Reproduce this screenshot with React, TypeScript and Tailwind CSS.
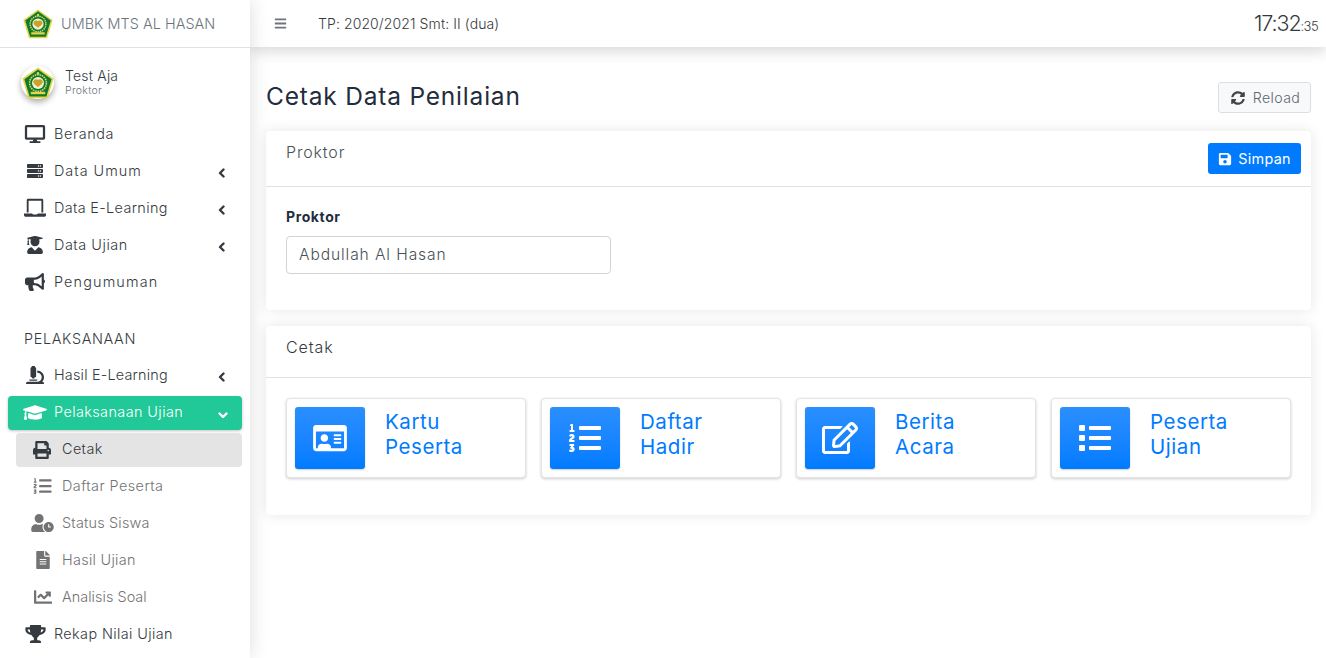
import React from "react";
import {
  FaDesktop, FaServer, FaUserGraduate, FaBullhorn, FaMicroscope, FaGraduationCap,
  FaPrint, FaListOl, FaUserClock, FaFileAlt, FaChartLine, FaTrophy, FaBars, FaSyncAlt, FaSave,
  FaRegIdCard, FaRegEdit, FaList,
} from "react-icons/fa";

function Logo({ className }: { className: string }) {
  return (
    <svg viewBox="0 0 40 40" className={className}>
      <path d="M20 0.5 L39.5 14.5 L32 39 L8 39 L0.5 14.5 Z" fill="#e5d44a" />
      <path d="M20 3 L37 15.3 L30.5 37 L9.5 37 L3 15.3 Z" fill="#0f7a2c" />
      <circle cx="20" cy="20" r="10.5" fill="none" stroke="#d9d36a" strokeWidth="2" strokeDasharray="2 1" />
      <circle cx="20" cy="20" r="7.5" fill="#f3f0d0" />
      <path d="M20 16 C17 14 14 16 14 19 C15 22 18 23 20 25 C22 23 25 22 26 19 C26 16 23 14 20 16Z" fill="#c9a227" />
      <path d="M11 31 H29 V34 H11Z" fill="#e5d44a" />
      <circle cx="20" cy="8" r="1.6" fill="#e5d44a" />
    </svg>
  );
}

function LaptopIcon() {
  return (
    <svg viewBox="0 0 24 20" className="w-[24px] h-[20px]" fill="currentColor">
      <path d="M3 1.5 C3 .7 3.7 0 4.5 0 H19.5 C20.3 0 21 .7 21 1.5 V15 H19 V2 H5 V15 H3 Z" />
      <path d="M0 16 H9 C9.2 16.8 9.8 17 10.5 17 H13.5 C14.2 17 14.8 16.8 15 16 H24 V17.5 C24 18.6 23.1 19.5 22 19.5 H2 C.9 19.5 0 18.6 0 17.5 Z" />
    </svg>
  );
}

function Angle({ down }: { down?: boolean }) {
  return (
    <svg viewBox="0 0 10 10" className="ml-auto w-[10px] h-[10px] mt-[4px]" fill="none" stroke="currentColor" strokeWidth="2.4" strokeLinecap="round" strokeLinejoin="round">
      <path d={down ? "M1.5 3.5 L5 7 L8.5 3.5" : "M6.5 1.5 L3 5 L6.5 8.5"} />
    </svg>
  );
}

type Item = { label: string; icon: React.ReactNode; arrow?: boolean; track: string };

const mainTop: Item[] = [
  { label: "Beranda", icon: <FaDesktop className="w-[22px] h-[18px]" />, track: "tracking-[0.6px]" },
  { label: "Data Umum", icon: <FaServer className="w-[18px] h-[16px]" />, arrow: true, track: "tracking-[1px]" },
  { label: "Data E-Learning", icon: <LaptopIcon />, arrow: true, track: "tracking-[0.35px]" },
  { label: "Data Ujian", icon: <FaUserGraduate className="w-[16px] h-[18px]" />, arrow: true, track: "tracking-[0.55px]" },
  { label: "Pengumuman", icon: <FaBullhorn className="w-[20px] h-[18px]" />, track: "tracking-[1.15px]" },
];

const sub: Item[] = [
  { label: "Daftar Peserta", icon: <FaListOl className="w-[19px] h-[18px]" />, track: "tracking-[0.45px]" },
  { label: "Status Siswa", icon: <FaUserClock className="w-[23px] h-[18px]" />, track: "tracking-[0.2px]" },
  { label: "Hasil Ujian", icon: <FaFileAlt className="w-[14px] h-[18px]" />, track: "tracking-[0.3px]" },
  { label: "Analisis Soal", icon: <FaChartLine className="w-[20px] h-[18px]" />, track: "tracking-[0.05px]" },
];

function NavRow({ item }: { item: Item }) {
  return (
    <div className="h-[34px] flex items-center pl-[24px] pr-[23px] text-[#343a40] shrink-0">
      <span className="w-[22px] flex justify-center shrink-0">{item.icon}</span>
      <span className={`ml-[8px] text-[14.4px] font-light text-[#343a40] whitespace-nowrap ${item.track}`}>{item.label}</span>
      {item.arrow && <Angle />}
    </div>
  );
}

function Tile({ icon, a, b }: { icon: React.ReactNode; a: string; b: string }) {
  return (
    <div className="flex-1 h-[80px] bg-white rounded-[4px] border border-[#e3e4e6] shadow-[0_1px_3px_rgba(0,0,0,0.2)] p-[8px] flex">
      <div className="w-[70px] h-[62px] rounded-[3px] bg-gradient-to-b from-[#2a8fff] to-[#007bff] text-white flex items-center justify-center shadow-[0_1px_2px_rgba(0,0,0,0.2)]">
        {icon}
      </div>
      <div className="ml-[20px] pt-[2px] text-[#007bff] text-[20.5px] leading-[25px] tracking-[0.55px] font-normal">
        <div>{a}</div>
        <div>{b}</div>
      </div>
    </div>
  );
}

export default function App() {
  return (
    <div className="w-[1326px] h-[658px] overflow-hidden flex bg-white font-['Inter',sans-serif]">
      <aside className="relative z-20 w-[250px] h-full shrink-0 bg-white shadow-[0_0_18px_rgba(0,0,0,0.14)] flex flex-col overflow-hidden">
        <div className="h-[48px] shrink-0 border-b border-[#dee2e6] flex items-center pl-[23px]">
          <Logo className="w-[30px] h-[30px]" />
          <span className="ml-[8px] text-[14.4px] font-light text-[#6c757d] tracking-[0.05px] whitespace-nowrap">UMBK MTS AL HASAN</span>
        </div>
        <div className="h-[69px] shrink-0 flex items-center pl-[21px]">
          <div className="w-[33px] h-[33px] rounded-full bg-white shadow-[0_3px_6px_rgba(0,0,0,0.35)] flex items-center justify-center">
            <Logo className="w-[32px] h-[32px]" />
          </div>
          <div className="ml-[11px]">
            <div className="text-[14px] leading-[16px] font-light text-[#343a40] tracking-[0.2px]">Test Aja</div>
            <div className="text-[10.5px] leading-[13px] font-light text-[#6c757d] tracking-[0.3px]">Proktor</div>
          </div>
        </div>
        <nav className="flex flex-col gap-[3px]">
          {mainTop.map((i) => <NavRow key={i.label} item={i} />)}
          <div className="h-[34px] mt-[19px] flex items-center pt-[1px] pl-[24px] text-[14.4px] font-light text-[#343a40] tracking-[0.65px] shrink-0">PELAKSANAAN</div>
          <NavRow item={{ label: "Hasil E-Learning", icon: <FaMicroscope className="w-[18px] h-[18px]" />, arrow: true, track: "tracking-[0.2px]" }} />
          <div className="mx-[8px] h-[34px] mt-[1px] rounded-[4px] bg-[#20c997] text-white flex items-center pl-[15px] pr-[14px] shadow-[0_1px_3px_rgba(0,0,0,0.25)] shrink-0">
            <span className="w-[24px] pb-[2px] flex justify-center shrink-0"><FaGraduationCap className="w-[24px] h-[19px]" /></span>
            <span className="ml-[7px] pb-[2px] text-[14.4px] font-light tracking-[0.42px] whitespace-nowrap">Pelaksanaan Ujian</span>
            <Angle down />
          </div>
          <div className="ml-[16px] mr-[8px] h-[34px] rounded-[4px] bg-[#e4e4e4] flex items-center pl-[17px] text-[#343a40] shrink-0">
            <FaPrint className="w-[18px] h-[18px]" />
            <span className="ml-[11px] pb-[2px] text-[14.4px] font-light tracking-[0.4px]">Cetak</span>
          </div>
          <div className="flex flex-col gap-[3px] -mt-[1px]">
            {sub.map((i) => (
              <div key={i.label} className="ml-[16px] h-[34px] flex items-center text-[#737373] shrink-0">
                <span className="w-[46px] pl-[7px] flex justify-center shrink-0">{i.icon}</span>
                <span className={`text-[14.4px] font-light whitespace-nowrap ${i.track}`}>{i.label}</span>
              </div>
            ))}
          </div>
          <NavRow item={{ label: "Rekap Nilai Ujian", icon: <FaTrophy className="w-[21px] h-[18px]" />, track: "tracking-[0.4px]" }} />
        </nav>
      </aside>

      <div className="flex-1 min-w-0 flex flex-col">
        <header className="relative z-10 h-[47px] shrink-0 bg-white shadow-[0_4px_14px_rgba(0,0,0,0.16)] flex items-center pl-[24px] pr-[8px]">
          <FaBars className="w-[13px] h-[13px] text-[#6c757d]" />
          <span className="ml-[31px] text-[14px] font-light text-[#343a40] tracking-[0.1px] whitespace-nowrap">TP: 2020/2021 Smt: II (dua)</span>
          <span className="ml-auto font-light text-[#343a40] whitespace-nowrap">
            <span className="text-[21.5px] tracking-[-1.1px]">17:32</span>
            <span className="text-[13px] tracking-[-0.6px]">:35</span>
          </span>
        </header>

        <main className="flex-1 min-h-0 pl-[16px] pr-[15px] pt-[35px] bg-white">
          <div className="h-[31px] flex items-center justify-between">
            <h1 className="text-[24.5px] mb-[3px] font-normal text-[#1f2d3d] tracking-[0.8px] whitespace-nowrap">Cetak Data Penilaian</h1>
            <button className="w-[93px] h-[31px] pl-[2px] border border-[#dcdfe1] rounded-[3px] bg-[#f8f9fa] text-[#5f666d] flex items-center justify-center">
              <FaSyncAlt className="w-[14px] h-[14px] text-[#444]" />
              <span className="ml-[8px] text-[14.2px] font-light tracking-[0.4px]">Reload</span>
            </button>
          </div>

          <section className="mt-[18px] h-[179px] bg-white rounded-[4px] shadow-[0_0_14px_rgba(0,0,0,0.1)]">
            <div className="h-[56px] border-b border-[#dee2e6] flex justify-between pl-[20px] pr-[10px]">
              <span className="pt-[9px] text-[16px] font-light text-[#495057] tracking-[0.85px]">Proktor</span>
              <button className="mt-[12px] w-[93px] h-[31px] rounded-[3px] bg-[#007bff] text-white flex items-center justify-center">
                <FaSave className="w-[14px] h-[14px]" />
                <span className="ml-[6px] text-[14.4px] font-normal tracking-[0.3px]">Simpan</span>
              </button>
            </div>
            <div className="pl-[20px] pt-[21px]">
              <div className="text-[14px] leading-[18px] font-bold text-[#1f2d3d] tracking-[0.6px]">Proktor</div>
              <div className="mt-[10px] w-[325px] h-[38px] border border-[#ced4da] rounded-[4px] flex items-center pl-[12px] text-[15.6px] font-light text-[#495057] tracking-[0.9px]">
                Abdullah Al Hasan
              </div>
            </div>
          </section>

          <section className="mt-[16px] h-[189px] bg-white rounded-[4px] shadow-[0_0_14px_rgba(0,0,0,0.1)]">
            <div className="h-[52px] border-b border-[#dee2e6] pl-[20px] pt-[9px]">
              <span className="text-[16px] font-light text-[#343a40] tracking-[0.9px]">Cetak</span>
            </div>
            <div className="px-[20px] pt-[20px] flex gap-[15px]">
              <Tile a="Kartu" b="Peserta" icon={<FaRegIdCard className="w-[36px] h-[30px]" />} />
              <Tile a="Daftar" b="Hadir" icon={<FaListOl className="w-[32px] h-[32px]" />} />
              <Tile a="Berita" b="Acara" icon={<FaRegEdit className="w-[36px] h-[32px]" />} />
              <Tile a="Peserta" b="Ujian" icon={<FaList className="w-[32px] h-[32px]" />} />
            </div>
          </section>
        </main>
      </div>
    </div>
  );
}
